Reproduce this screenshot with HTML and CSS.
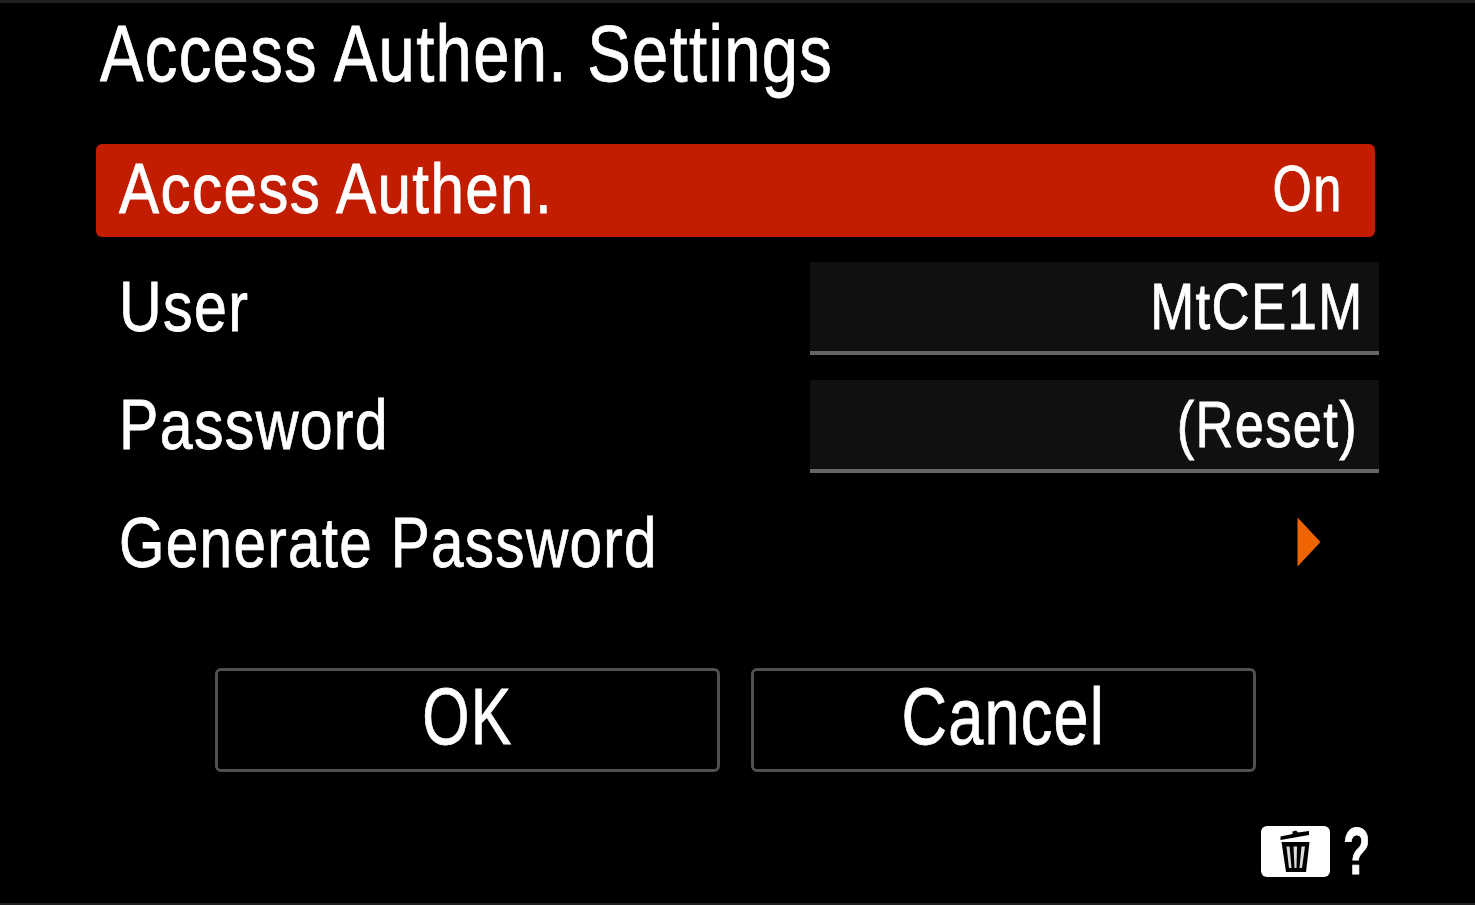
FILE: index.html
```html
<!DOCTYPE html>
<html lang="en">
<head>
<meta charset="utf-8">
<title>Access Authen. Settings</title>
<link rel="stylesheet" href="styles.css">
</head>
<body>
<main class="screen">
  <h1 class="title"><span class="text title-text">Access Authen. Settings</span></h1>
  <section class="menu">
    <div class="row selected">
      <span class="text label access">Access Authen.</span>
      <span class="text value on">On</span>
    </div>
    <div class="row">
      <span class="text label user">User</span>
      <div class="field"><span class="text value name">MtCE1M</span></div>
    </div>
    <div class="row">
      <span class="text label password">Password</span>
      <div class="field"><span class="text value reset">(Reset)</span></div>
    </div>
    <div class="row">
      <span class="text label generate">Generate Password</span>
      <svg class="arrow" viewBox="0 0 24 50"><path d="M.5 .5 23.5 25 .5 49.5Z" fill="#f06400"/></svg>
    </div>
  </section>
  <div class="actions">
    <button class="button"><span class="text ok">OK</span></button>
    <button class="button"><span class="text cancel">Cancel</span></button>
  </div>
  <footer class="help">
    <span class="key">
      <svg class="trash" viewBox="0 0 30 43">
        <path d="M.5 6.5 12.5 4V1.5L16 .5 18 2.5 29 1V5L.5 10Z" fill="#000"/>
        <path d="M1.5 12H29.5L26 42H6Z" fill="#000"/>
        <path d="M6.5 16.5H9.5L11.5 38H9Z M13.5 16.5H17L16.5 38H14.5Z M21.5 16.5H25L22 38H19.5Z" fill="#ddd"/>
      </svg>
    </span>
    <span class="text question">?</span>
  </footer>
</main>
</body>
</html>
```
FILE: styles.css
```css
* { box-sizing: border-box; }

body {
  margin: 0;
  background: #000;
  color: #fff;
  font-family: "Liberation Sans", Arial, sans-serif;
}

.screen {
  display: flex;
  flex-direction: column;
  width: 1475px;
  height: 905px;
  padding: 0 96px;
  border-top: 3px solid #222;
  border-bottom: 2px solid #221f20;
  overflow: hidden;
}

/* Condensed lettering */
.text {
  display: block;
  white-space: nowrap;
  letter-spacing: 1.6px;
  transform-origin: left center;
  -webkit-text-stroke: 0.8px currentColor;
}

.title {
  height: 102px;
  margin: 0 0 39px;
  padding-left: 4px;
  font-size: 79px;
  font-weight: 400;
  line-height: 102px;
}
.title-text { transform: scaleX(0.825); }

.menu { display: grid; gap: 25px; }

.row {
  display: flex;
  align-items: center;
  justify-content: space-between;
  width: 1283px;
  height: 93px;
  padding-left: 23px;
}
.row.selected {
  width: 1279px;
  padding-right: 31px;
  border-radius: 6px;
  background: #c21d00;
}

.label {
  padding-bottom: 4px;
  font-size: 71px;
  line-height: 89px;
}
.access { transform: scaleX(0.848); }
.user { transform: scaleX(0.833); }
.password { transform: scaleX(0.832); }
.generate { transform: scaleX(0.823); }

.value {
  font-size: 64px;
  line-height: 91px;
  transform-origin: right center;
}
.on { padding-bottom: 3px; transform: translateX(-1px) scaleX(0.79); }
.name { transform: translateX(-1px) scaleX(0.825); }
.reset { transform: translateX(-3px) scaleX(0.82); }

.field {
  display: flex;
  justify-content: flex-end;
  width: 569px;
  height: 93px;
  padding-right: 14px;
  border-bottom: 4px solid #666;
  background: #101010;
}
.field .reset { margin-right: 4px; }

.arrow {
  width: 24px;
  height: 50px;
  margin: 0 58px 6px 0;
}

.actions {
  display: flex;
  gap: 31px;
  margin: 77px 0 0 119px;
}
.button {
  display: flex;
  align-items: center;
  justify-content: center;
  width: 505px;
  height: 104px;
  padding: 0 0 7px;
  border: 3px solid #505050;
  border-radius: 6px;
  background: #000;
  color: #fff;
  font-family: inherit;
  font-size: 80px;
  line-height: 90px;
}
.button .text { transform-origin: center; }
.button .ok { transform: scaleX(0.76); }
.button .cancel { transform: scaleX(0.787); }

.help {
  display: flex;
  align-items: center;
  gap: 13px;
  width: 118px;
  height: 52px;
  margin: 53px 0 0 1165px;
}
.key {
  display: flex;
  flex: none;
  align-items: center;
  justify-content: center;
  width: 69px;
  height: 51px;
  padding-right: 2px;
  border-radius: 6px;
  background: #fff;
}
.trash { width: 30px; height: 43px; }
.question {
  font-size: 66px;
  font-weight: 700;
  line-height: 52px;
  transform: scaleX(0.68);
}
```
